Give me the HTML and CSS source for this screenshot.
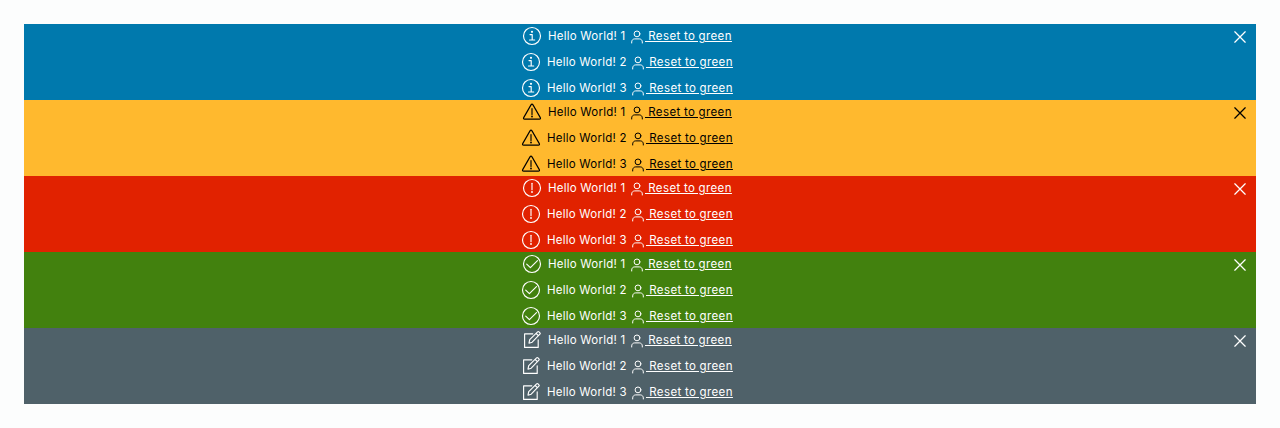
FILE: index.html
```
<!DOCTYPE html>
<html lang="en">
<head>
<meta charset="utf-8">
<title>Alerts</title>
<link rel="stylesheet" href="styles.css">
</head>
<body>
<svg class="defs" aria-hidden="true">
  <symbol id="info" viewBox="0 0 20 20"><circle cx="10" cy="10" r="8.5"/><path d="M8 8.6h2.2v5.3M7.5 14h5.2"/><circle class="dot" cx="10" cy="5.8" r="1.1"/></symbol>
  <symbol id="warning" viewBox="0 0 20 20"><path d="M9 2.9 1.7 15.6q-.7 1.5.9 1.5h14.8q1.6 0 .9-1.5L11 2.9q-1-1.5-2 0ZM10 6.5v6"/><circle class="dot" cx="10" cy="14.5" r=".9"/></symbol>
  <symbol id="danger" viewBox="0 0 20 20"><circle cx="10" cy="10" r="8.5"/><path d="M10 5.2v6.5"/><circle class="dot" cx="10" cy="14" r=".9"/></symbol>
  <symbol id="success" viewBox="0 0 20 20"><circle cx="10" cy="10" r="8.5"/><path d="m4.7 10.2 3.7 3.5 7.1-7"/></symbol>
  <symbol id="note" viewBox="0 0 20 20"><path d="M10.8 3.8H2.6v13.6h13.6V9.8M7 13.2l.7-3.5 7.9-7.8q.7-.7 1.4 0l.9.9q.7.7 0 1.4L10.2 12.2ZM14.2 3.5l2.2 2.2"/></symbol>
  <symbol id="user" viewBox="0 0 14 14"><circle cx="7" cy="3.9" r="2.9"/><path d="M1.7 13v-1.1c0-1.8 1.4-3 3-3h4.6c1.6 0 3 1.2 3 3V13"/></symbol>
  <symbol id="close" viewBox="0 0 14 14"><path d="m1.8 1.8 10.4 10.4M12.2 1.8 1.8 12.2"/></symbol>
</svg>
<main id="alerts" class="alerts"></main>
<script src="alerts.js"></script>
</body>
</html>
```
FILE: styles.css
```
body {
  margin: 0;
  background: #fcfdfd;
  font: 11.5px/24px Inter, "Liberation Sans", sans-serif;
  letter-spacing: .23px;
}
.defs { display: none; }
svg { fill: none; stroke: currentColor; stroke-width: 1.15; stroke-linecap: round; stroke-linejoin: round; }
.dot { fill: currentColor; stroke: none; }
.alerts { padding: 24px; }
.alert {
  display: grid;
  grid-template-columns: 1fr 49px;
  height: 76px;
  color: #fff;
}
.alert-info { background: #0079ad; }
.alert-warning { background: #ffb92e; color: #000; }
.alert-danger { background: #e12200; }
.alert-success { background: #42810e; }
.alert-note { background: #4f6169; }
.items {
  display: flex;
  flex-direction: column;
  gap: 2px;
  padding-left: 497px;
}
.item { display: flex; align-items: center; height: 24px; }
.item:first-child { padding-left: 1px; }
.status { width: 20px; height: 20px; margin-right: 6px; }
.message { width: 84px; white-space: nowrap; }
.item:first-child .message { width: 82px; }
.user { width: 14px; height: 14px; margin: 2px 1px 0 0; stroke-width: 1; }
.message, .link { height: 24px; }
.link {
  color: inherit;
  white-space: pre;
  letter-spacing: .42px;
  word-spacing: -.5px;
  text-decoration: underline;
  text-decoration-thickness: 1px;
  text-underline-offset: 1px;
}
.close {
  width: 14px;
  height: 14px;
  margin: 6px 9px 0 auto;
  padding: 0;
  border: 0;
  color: inherit;
  background: none;
}
.close svg { display: block; width: 14px; height: 14px; stroke-width: 1.25; }
```
FILE: alerts.js
```
const types = ["info", "warning", "danger", "success", "note"];
const icon = (name, cls) => `<svg class="${cls}" aria-hidden="true"><use href="#${name}"/></svg>`;
const item = (type, n) => `
  <div class="item">${icon(type, "status")}<span class="message">Hello World! ${n}</span>${icon("user", "user")}<a class="link" href="#"> Reset to green</a></div>`;

document.getElementById("alerts").innerHTML = types.map(type => `
  <section class="alert alert-${type}">
    <div class="items">${[1, 2, 3].map(n => item(type, n)).join("")}</div>
    <button class="close" aria-label="Close">${icon("close", "cross")}</button>
  </section>`).join("");
```
